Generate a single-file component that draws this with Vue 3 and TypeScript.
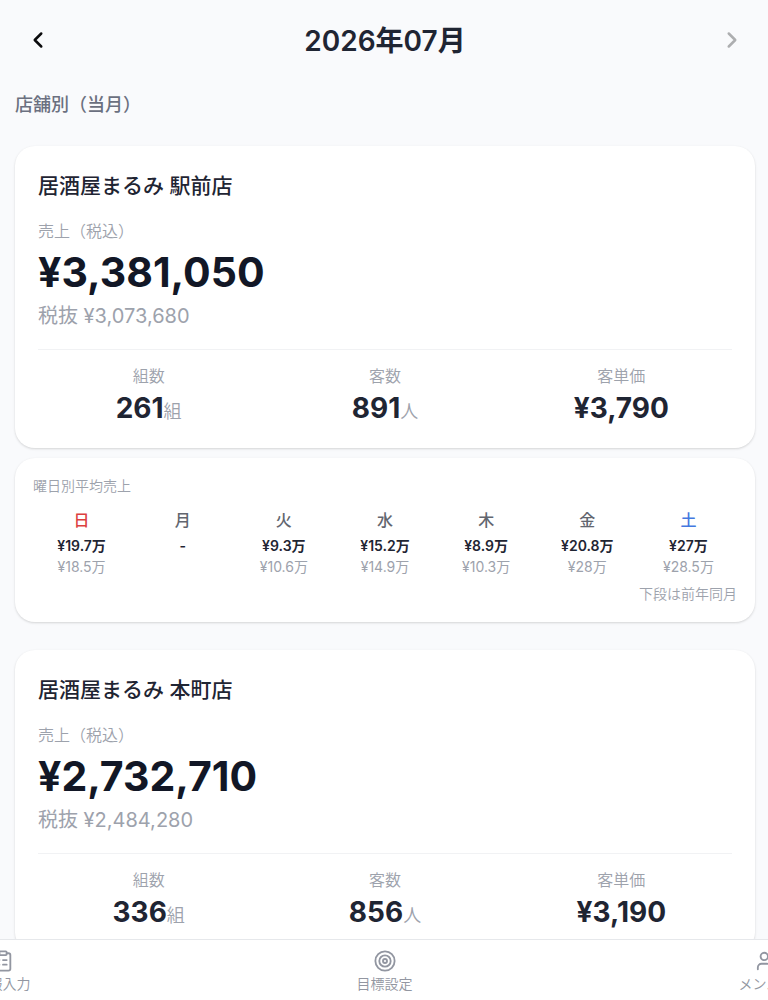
<script setup lang="ts">
import { computed, ref } from 'vue'

interface Weekday {
  label: string
  tone?: 'sunday' | 'saturday'
  current: string
  previous?: string
}

interface Store {
  name: string
  sales: string
  salesExTax: string
  groups: string
  guests: string
  perGuest: string
  weekdays?: Weekday[]
}

const year = ref(2026)
const month = ref(7)
const lastMonth = 2026 * 12 + 7
const isLatest = computed(() => year.value * 12 + month.value >= lastMonth)
const monthLabel = computed(() => `${year.value}年${String(month.value).padStart(2, '0')}月`)

function moveMonth(step: number) {
  const index = year.value * 12 + month.value - 1 + step
  year.value = Math.floor(index / 12)
  month.value = (index % 12) + 1
}

const stores: Store[] = [
  {
    name: '居酒屋まるみ 駅前店',
    sales: '¥3,381,050',
    salesExTax: '¥3,073,680',
    groups: '261',
    guests: '891',
    perGuest: '¥3,790',
    weekdays: [
      { label: '日', tone: 'sunday', current: '¥19.7万', previous: '¥18.5万' },
      { label: '月', current: '-' },
      { label: '火', current: '¥9.3万', previous: '¥10.6万' },
      { label: '水', current: '¥15.2万', previous: '¥14.9万' },
      { label: '木', current: '¥8.9万', previous: '¥10.3万' },
      { label: '金', current: '¥20.8万', previous: '¥28万' },
      { label: '土', tone: 'saturday', current: '¥27万', previous: '¥28.5万' },
    ],
  },
  {
    name: '居酒屋まるみ 本町店',
    sales: '¥2,732,710',
    salesExTax: '¥2,484,280',
    groups: '336',
    guests: '856',
    perGuest: '¥3,190',
  },
]
</script>

<template>
  <div class="app">
    <main class="content">
      <header class="month-bar">
        <button class="month-button" type="button" aria-label="前の月" @click="moveMonth(-1)">
          <svg class="chevron" viewBox="0 0 24 24" aria-hidden="true"><path d="m15 18-6-6 6-6" /></svg>
        </button>
        <h1 class="month">{{ monthLabel }}</h1>
        <button class="month-button" type="button" aria-label="次の月" :disabled="isLatest" @click="moveMonth(1)">
          <svg class="chevron" viewBox="0 0 24 24" aria-hidden="true"><path d="m9 18 6-6-6-6" /></svg>
        </button>
      </header>

      <h2 class="section-title">店舗別（当月）</h2>

      <div class="stores">
        <section v-for="store in stores" :key="store.name" class="store">
          <article class="card summary">
            <h3 class="store-name">{{ store.name }}</h3>
            <p class="sales-label">売上（税込）</p>
            <p class="sales">{{ store.sales }}</p>
            <p class="sales-ex">税抜 {{ store.salesExTax }}</p>
            <dl class="stats">
              <div class="stat">
                <dt>組数</dt>
                <dd>{{ store.groups }}<span class="unit">組</span></dd>
              </div>
              <div class="stat">
                <dt>客数</dt>
                <dd>{{ store.guests }}<span class="unit">人</span></dd>
              </div>
              <div class="stat">
                <dt>客単価</dt>
                <dd>{{ store.perGuest }}</dd>
              </div>
            </dl>
          </article>

          <article v-if="store.weekdays" class="card weekly">
            <h4 class="weekly-title">曜日別平均売上</h4>
            <ul class="days">
              <li v-for="day in store.weekdays" :key="day.label" class="day">
                <span class="day-name" :class="day.tone">{{ day.label }}</span>
                <span class="day-current">{{ day.current }}</span>
                <span v-if="day.previous" class="day-previous">{{ day.previous }}</span>
              </li>
            </ul>
            <p class="note">下段は前年同月</p>
          </article>
        </section>
      </div>
    </main>

    <nav class="tabs">
      <a class="tab" href="#report">
        <svg class="tab-icon" viewBox="0 0 24 24" aria-hidden="true">
          <rect x="8" y="1.5" width="8" height="4" rx="1" />
          <path d="M16 3.5h2a2 2 0 0 1 2 2v15a2 2 0 0 1-2 2H6a2 2 0 0 1-2-2v-15a2 2 0 0 1 2-2h2M12 11h4M12 16h4M8 11h.01M8 16h.01" />
        </svg>
        <span>日報入力</span>
      </a>
      <a class="tab" href="#target">
        <svg class="tab-icon" viewBox="0 0 24 24" aria-hidden="true">
          <circle cx="12" cy="12" r="10.5" />
          <circle cx="12" cy="12" r="6.2" />
          <circle cx="12" cy="12" r="2.2" />
        </svg>
        <span>目標設定</span>
      </a>
      <a class="tab" href="#members">
        <svg class="tab-icon" viewBox="0 0 24 24" aria-hidden="true">
          <circle cx="9" cy="7" r="4" />
          <path d="M16 21v-2a4 4 0 0 0-4-4H6a4 4 0 0 0-4 4v2M22 21v-2a4 4 0 0 0-3-3.87M16 3.13a4 4 0 0 1 0 7.75" />
        </svg>
        <span>メンバー</span>
      </a>
    </nav>
  </div>
</template>

<style>
body {
  margin: 0;
  background: #f9fafc;
}
</style>

<style scoped>
.app {
  display: flex;
  flex-direction: column;
  height: 100vh;
  color: #1f2533;
  background: #f9fafc;
  font-family: Inter, "Noto Sans CJK JP", sans-serif;
  font-variation-settings: "opsz" 14;
}

h1, h2, h3, h4, p, dl, dd, ul {
  margin: 0;
  padding: 0;
}

.content {
  flex: 1;
  min-height: 0;
  overflow-y: auto;
  scrollbar-width: none;
  padding: 16px 13px 28px 15px;
}

.month-bar {
  display: flex;
  align-items: center;
  justify-content: space-between;
  height: 48px;
}

.month-button {
  display: flex;
  align-items: center;
  justify-content: center;
  width: 46px;
  height: 46px;
  padding: 0;
  border: 0;
  background: none;
  color: #0b0b0d;
  cursor: pointer;
}

.month-button:disabled {
  color: #adaeb0;
  cursor: default;
}

.chevron {
  width: 26px;
  height: 26px;
  fill: none;
  stroke: currentColor;
  stroke-width: 2.3;
  stroke-linecap: round;
  stroke-linejoin: round;
}

.month {
  padding-top: 2px;
  font-size: 28px;
  line-height: 40px;
  font-weight: 600;
}

.section-title {
  margin: 27px 0;
  color: #6b7080;
  font-size: 18px;
  line-height: 28px;
  font-weight: 500;
}

.stores {
  display: flex;
  flex-direction: column;
  gap: 28px;
}

.store {
  display: flex;
  flex-direction: column;
  gap: 10px;
}

.card {
  border-radius: 20px;
  background: #fff;
  box-shadow: 0 1px 3px rgba(0, 0, 0, 0.1), 0 1px 2px rgba(0, 0, 0, 0.06);
}

.summary {
  padding: 26px 23px 22px;
}

.store-name {
  font-size: 21px;
  line-height: 28px;
  font-weight: 500;
}

.sales-label {
  margin-top: 19px;
  color: #9da2ac;
  font-size: 16px;
  line-height: 24px;
  font-weight: 350;
}

.sales {
  margin-top: 2px;
  color: #121726;
  font-size: 41px;
  line-height: 54px;
  font-weight: 700;
}

.sales-ex {
  margin-top: 1px;
  color: #9da2ac;
  font-size: 20px;
  line-height: 32px;
  font-weight: 400;
}

.stats {
  display: grid;
  grid-template-columns: repeat(3, 1fr);
  gap: 15px;
  margin-top: 17px;
  padding-top: 14px;
  border-top: 1px solid #f1f2f4;
  text-align: center;
}

.stat dt {
  color: #9da2ac;
  font-size: 16px;
  line-height: 24px;
  font-weight: 350;
}

.stat dd {
  margin-top: 2px;
  font-size: 28px;
  line-height: 36px;
  font-weight: 700;
}

.unit {
  color: #9da2ac;
  font-size: 18px;
  line-height: 18px;
  font-weight: 350;
}

.weekly {
  padding: 18px;
}

.weekly-title {
  color: #9da2ac;
  font-size: 14px;
  line-height: 20px;
  font-weight: 350;
}

.days {
  display: grid;
  grid-template-columns: repeat(7, 1fr);
  gap: 4px;
  margin-top: 12px;
  list-style: none;
}

.day {
  display: flex;
  flex-direction: column;
  align-items: center;
}

.day-name {
  margin-bottom: 3px;
  color: #62666f;
  font-size: 16px;
  line-height: 24px;
  font-weight: 500;
}

.sunday {
  color: #dc3f3f;
}

.saturday {
  color: #4478e0;
}

.day-current {
  font-size: 14px;
  line-height: 22px;
  font-weight: 600;
}

.day-previous {
  color: #9da2ac;
  font-size: 14px;
  line-height: 20px;
  font-weight: 400;
}

.note {
  margin-top: 7px;
  color: #9da2ac;
  font-size: 14px;
  line-height: 20px;
  font-weight: 350;
  text-align: right;
}

.tabs {
  display: flex;
  justify-content: center;
  gap: 326px;
  overflow: hidden;
  padding: 10px 0 6px 1px;
  border-top: 1px solid #e6e8eb;
  background: #fff;
}

.tab {
  display: flex;
  flex: none;
  flex-direction: column;
  align-items: center;
  width: 56px;
  gap: 2px;
  color: #9296a1;
  font-size: 14px;
  line-height: 20px;
  font-weight: 350;
  text-decoration: none;
  white-space: nowrap;
}

.tab-icon {
  width: 22px;
  height: 22px;
  overflow: visible;
  fill: none;
  stroke: currentColor;
  stroke-width: 2;
  stroke-linecap: round;
  stroke-linejoin: round;
}
</style>
